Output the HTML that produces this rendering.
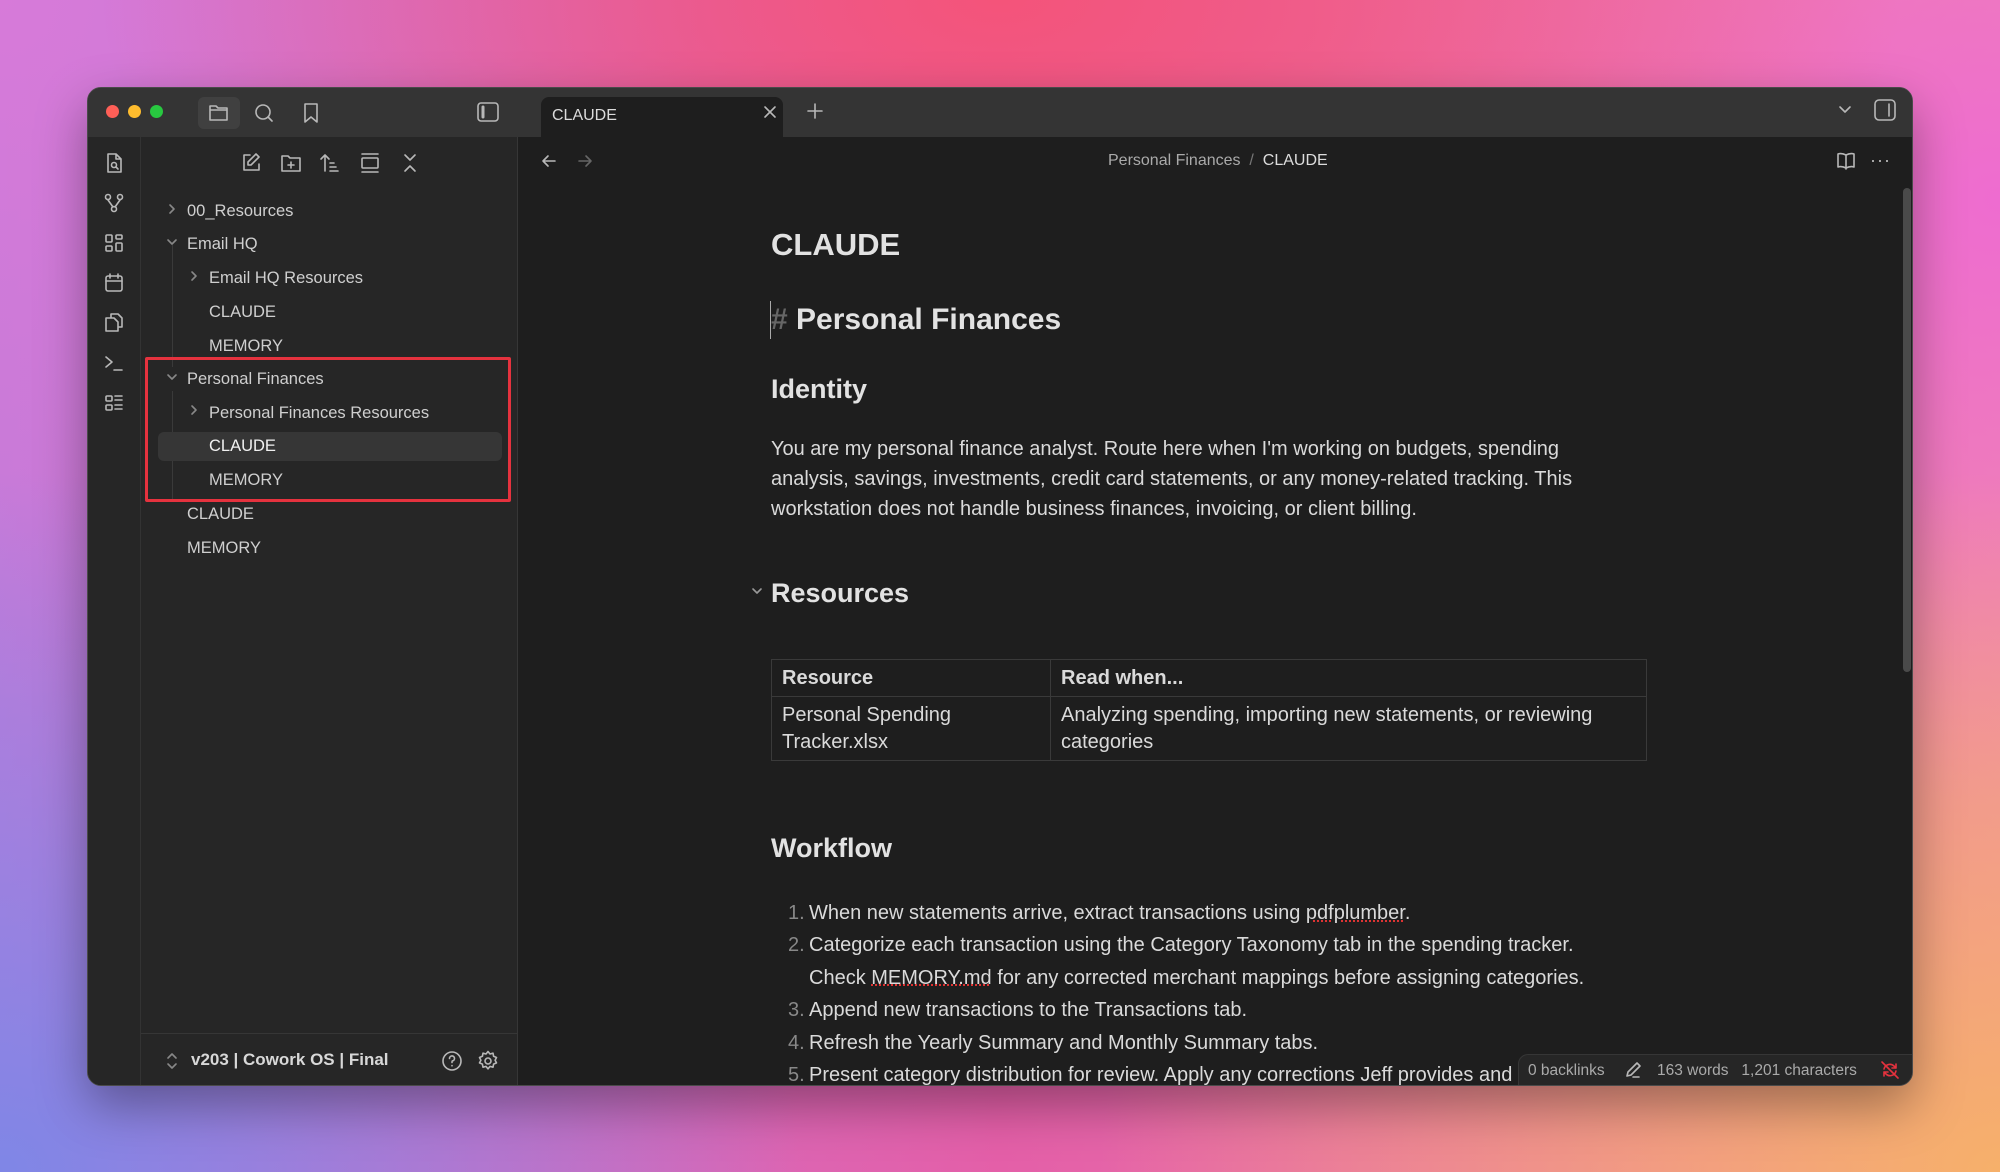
<!DOCTYPE html>
<html><head><meta charset="utf-8"><style>
*{margin:0;padding:0;box-sizing:border-box}
body{width:2000px;height:1172px;overflow:hidden;font-family:"Liberation Sans",sans-serif;position:relative;
background:
radial-gradient(ellipse 900px 420px at 1000px 0px,#f4547a 0%,rgba(244,84,122,0) 100%),
radial-gradient(ellipse 900px 700px at 2000px 1172px,#f6b06a 0%,rgba(246,176,106,0) 100%),
radial-gradient(ellipse 800px 700px at 0px 1172px,#7f86e6 0%,rgba(127,134,230,0) 100%),
radial-gradient(ellipse 700px 700px at 0px 0px,#d77ad9 0%,rgba(215,122,217,0) 100%),
radial-gradient(ellipse 700px 600px at 2000px 200px,#ee6cd0 0%,rgba(238,108,208,0) 100%),
linear-gradient(90deg,#c27ad8,#e45fa8 50%,#ef8aa8);}
.win{position:absolute;left:87px;top:87px;width:1826px;height:999px;border-radius:14px;overflow:hidden;background:#1e1e1e;box-shadow:0 20px 50px rgba(0,0,0,.35);border:1px solid #4a4a4a}
.a{position:absolute}
.tb{left:0;top:0;width:100%;height:49px;background:#343434}
.dot{width:13px;height:13px;border-radius:50%;top:17px}
svg{position:absolute;fill:none;stroke:#b8b8b8;stroke-width:1.6;stroke-linecap:round;stroke-linejoin:round}
.rib{left:0;top:49px;width:53px;height:950px;background:#262626;border-right:1px solid #333}
.side{left:53px;top:49px;width:377px;height:950px;background:#262626;border-right:1px solid #363636}
.row{position:absolute;font-size:16.5px;color:#cfcfcf;line-height:20px}
.t{position:absolute;white-space:nowrap}
.h{font-weight:bold;color:#e2e2e2}
.p{font-size:20px;color:#dadada}
</style></head><body>
<div class="win">
 <div class="a tb"></div>
 <div class="a dot" style="left:18px;background:#fe5f57"></div>
 <div class="a dot" style="left:40px;background:#febc2e"></div>
 <div class="a dot" style="left:62px;background:#28c840"></div>
 <div class="a" style="left:110px;top:9px;width:42px;height:32px;border-radius:6px;background:#404040"></div>
 <svg style="left:119px;top:14px" width="24" height="22" viewBox="0 0 24 22"><path d="M3 4h6l2 2h9v12H3z M3 8h17"/></svg>
 <svg style="left:165px;top:14px" width="22" height="22" viewBox="0 0 22 22"><circle cx="10" cy="10" r="7"/><path d="M15 15l4 4"/></svg>
 <svg style="left:212px;top:13px" width="22" height="24" viewBox="0 0 22 24"><path d="M5 3h12v18l-6-5-6 5z"/></svg>
 <svg style="left:388px;top:13px" width="24" height="22" viewBox="0 0 24 22"><rect x="2" y="2" width="20" height="18" rx="3"/><path d="M7 6v10" stroke-width="3"/></svg>
 <div class="a" style="left:453px;top:9px;width:242px;height:41px;background:#1e1e1e;border-radius:8px 8px 0 0"></div>
 <div class="t" style="left:464px;top:19px;font-size:16px;color:#dcdcdc">CLAUDE</div>
 <svg style="left:674px;top:16px" width="16" height="16" viewBox="0 0 16 16"><path d="M3 3l10 10M13 3L3 13"/></svg>
 <svg style="left:718px;top:14px" width="18" height="18" viewBox="0 0 18 18"><path d="M9 2v14M2 9h14"/></svg>
 <svg style="left:1749px;top:16px" width="16" height="12" viewBox="0 0 16 12"><path d="M3 3l5 5 5-5"/></svg>
 <svg style="left:1785px;top:10px" width="24" height="24" viewBox="0 0 24 24"><rect x="2" y="2" width="20" height="20" rx="4"/><path d="M16 6v12"/></svg>

 <div class="a rib"></div>
 <svg style="left:15px;top:64px" width="22" height="22" viewBox="0 0 22 22"><path d="M5 2h8l5 5v13H5z M13 2v5h5"/><circle cx="11" cy="13" r="2.5"/><path d="M13 15l2 2"/></svg>
 <svg style="left:15px;top:104px" width="22" height="22" viewBox="0 0 22 22"><circle cx="5" cy="5" r="2.5"/><circle cx="17" cy="5" r="2.5"/><circle cx="11" cy="17" r="2.5"/><path d="M5 8l5 7M17 8l-5 7"/></svg>
 <svg style="left:15px;top:144px" width="22" height="22" viewBox="0 0 22 22"><rect x="3" y="3" width="6" height="7" rx="1"/><rect x="13" y="3" width="6" height="4" rx="1"/><rect x="3" y="14" width="6" height="5" rx="1"/><rect x="13" y="11" width="6" height="8" rx="1"/></svg>
 <svg style="left:15px;top:184px" width="22" height="22" viewBox="0 0 22 22"><rect x="3" y="4" width="16" height="15" rx="2"/><path d="M3 9h16M7 2v4M15 2v4"/></svg>
 <svg style="left:15px;top:223px" width="22" height="22" viewBox="0 0 22 22"><path d="M8 6V3h7l4 4v9h-4 M3 7h8l4 4v9H3z"/></svg>
 <svg style="left:15px;top:264px" width="22" height="22" viewBox="0 0 22 22"><path d="M3 5l6 5-6 5M11 18h8"/></svg>
 <svg style="left:15px;top:304px" width="22" height="22" viewBox="0 0 22 22"><rect x="3" y="4" width="6" height="5" rx="1"/><rect x="3" y="13" width="6" height="5" rx="1"/><path d="M12 4h7M12 8h7M12 13h7M12 17h7"/></svg>

 <div class="a side"></div>
 <svg style="left:152px;top:64px" width="22" height="22" viewBox="0 0 22 22"><path d="M10 3H4v15h15v-6 M16 2l3 3-8 8H8v-3z"/></svg>
 <svg style="left:192px;top:64px" width="22" height="22" viewBox="0 0 22 22"><path d="M2 4h6l2 2h10v13H2z M11 10v6M8 13h6"/></svg>
 <svg style="left:231px;top:64px" width="22" height="22" viewBox="0 0 22 22"><path d="M6 19V3M2 7l4-4 4 4M11 11h4M11 15h6M11 19h8"/></svg>
 <svg style="left:271px;top:64px" width="22" height="22" viewBox="0 0 22 22"><path d="M3 2h16M3 20h16"/><rect x="3" y="6" width="16" height="10" rx="1"/></svg>
 <svg style="left:311px;top:64px" width="22" height="22" viewBox="0 0 22 22"><path d="M6 3l5 5 5-5M6 19l5-5 5 5"/></svg>

 <div class="a" style="left:84px;top:157px;width:1px;height:122px;background:#3a3a3a"></div>
 <div class="a" style="left:84px;top:303px;width:1px;height:108px;background:#3a3a3a"></div>
 <div class="a" style="left:70px;top:344px;width:344px;height:29px;background:#363636;border-radius:6px"></div>
 <div class="a" style="left:57px;top:269px;width:366px;height:145px;border:3px solid #e5323e;border-radius:2px"></div>

 <svg style="left:77px;top:114px" width="14" height="14" viewBox="0 0 14 14"><path d="M5 3l4 4-4 4" stroke="#888"/></svg>
 <div class="row" style="left:99px;top:113px">00_Resources</div>
 <svg style="left:77px;top:147px" width="14" height="14" viewBox="0 0 14 14"><path d="M3 5l4 4 4-4" stroke="#888"/></svg>
 <div class="row" style="left:99px;top:146px">Email HQ</div>
 <svg style="left:99px;top:181px" width="14" height="14" viewBox="0 0 14 14"><path d="M5 3l4 4-4 4" stroke="#888"/></svg>
 <div class="row" style="left:121px;top:180px">Email HQ Resources</div>
 <div class="row" style="left:121px;top:214px">CLAUDE</div>
 <div class="row" style="left:121px;top:248px">MEMORY</div>
 <svg style="left:77px;top:282px" width="14" height="14" viewBox="0 0 14 14"><path d="M3 5l4 4 4-4" stroke="#888"/></svg>
 <div class="row" style="left:99px;top:281px">Personal Finances</div>
 <svg style="left:99px;top:315px" width="14" height="14" viewBox="0 0 14 14"><path d="M5 3l4 4-4 4" stroke="#888"/></svg>
 <div class="row" style="left:121px;top:315px">Personal Finances Resources</div>
 <div class="row" style="left:121px;top:348px;color:#f0f0f0">CLAUDE</div>
 <div class="row" style="left:121px;top:382px">MEMORY</div>
 <div class="row" style="left:99px;top:416px">CLAUDE</div>
 <div class="row" style="left:99px;top:450px">MEMORY</div>

 <div class="a" style="left:53px;top:945px;width:377px;height:1px;background:#363636"></div>
 <svg style="left:77px;top:962px" width="14" height="22" viewBox="0 0 14 22"><path d="M3 8l4-4 4 4M3 14l4 4 4-4" stroke="#888"/></svg>
 <div class="t" style="left:103px;top:962px;font-size:17px;font-weight:bold;color:#d8d8d8">v203 | Cowork OS | Final</div>
 <svg style="left:352px;top:961px" width="24" height="24" viewBox="0 0 24 24"><circle cx="12" cy="12" r="9"/><path d="M9.5 9.5a2.5 2.5 0 1 1 3 2.4c-.5.2-.5.6-.5 1.6M12 16.5v.3"/></svg>
 <svg style="left:388px;top:961px" width="24" height="24" viewBox="0 0 24 24"><circle cx="12" cy="12" r="3"/><path d="M12 2.5l2 2.5 3-.8.6 3.1 2.9 1.2-1.4 2.7 1.4 2.7-2.9 1.2-.6 3.1-3-.8-2 2.5-2-2.5-3 .8-.6-3.1-2.9-1.2 1.4-2.7-1.4-2.7 2.9-1.2.6-3.1 3 .8z"/></svg>

 <svg style="left:451px;top:63px" width="20" height="20" viewBox="0 0 20 20"><path d="M16 10H4M9 5l-5 5 5 5"/></svg>
 <svg style="left:487px;top:63px" width="20" height="20" viewBox="0 0 20 20"><path d="M4 10h12M11 5l5 5-5 5" stroke="#666"/></svg>
 <div class="t" style="left:1020px;top:64px;font-size:16px;color:#aaa">Personal Finances <span style="color:#777">&nbsp;/&nbsp;</span> <span style="color:#dcdcdc">CLAUDE</span></div>
 <svg style="left:1747px;top:62px" width="22" height="22" viewBox="0 0 22 22"><path d="M11 5v14M11 5c-2-1-5-2-8-1v13c3-1 6 0 8 1 2-1 5-2 8-1V4c-3-1-6 0-8 1z"/></svg>
 <div class="t" style="left:1782px;top:62px;font-size:18px;color:#bbb;letter-spacing:1px">···</div>
 <div class="a" style="left:1815px;top:100px;width:8px;height:484px;background:#4a4a4a;border-radius:4px"></div>

 <div class="t h" style="left:683px;top:139px;font-size:31px">CLAUDE</div>
 <div class="a" style="left:682px;top:213px;width:1px;height:38px;background:#aaa"></div>
 <div class="t h" style="left:683px;top:215px;font-size:30px"><span style="color:#666">#</span> Personal Finances</div>
 <div class="t h" style="left:683px;top:286px;font-size:27px">Identity</div>
 <div class="t p" style="left:683px;top:346px;line-height:30px">You are my personal finance analyst. Route here when I'm working on budgets, spending<br>analysis, savings, investments, credit card statements, or any money-related tracking. This<br>workstation does not handle business finances, invoicing, or client billing.</div>
 <svg style="left:662px;top:496px" width="14" height="14" viewBox="0 0 14 14"><path d="M3 5l4 4 4-4" stroke="#999"/></svg>
 <div class="t h" style="left:683px;top:490px;font-size:27px">Resources</div>

 <div class="a" style="left:683px;top:571px;width:876px;height:102px;border:1px solid #3a3a3a"></div>
 <div class="a" style="left:683px;top:608px;width:876px;height:1px;background:#3a3a3a"></div>
 <div class="a" style="left:962px;top:571px;width:1px;height:102px;background:#3a3a3a"></div>
 <div class="t p h" style="left:694px;top:579px">Resource</div>
 <div class="t p h" style="left:973px;top:579px">Read when...</div>
 <div class="t p" style="left:694px;top:614px;line-height:27px">Personal Spending<br>Tracker.xlsx</div>
 <div class="t p" style="left:973px;top:614px;line-height:27px">Analyzing spending, importing new statements, or reviewing<br>categories</div>

 <div class="t h" style="left:683px;top:745px;font-size:27px">Workflow</div>
 <div class="t p" style="left:700px;top:809px;line-height:32.4px;color:#888">1.<br>2.<br><br>3.<br>4.<br>5.</div>
 <div class="t p" style="left:721px;top:809px;line-height:32.4px">When new statements arrive, extract transactions using <u style="text-decoration:underline dotted #d33">pdfplumber</u>.<br>Categorize each transaction using the Category Taxonomy tab in the spending tracker.<br>Check <u style="text-decoration:underline dotted #d33">MEMORY.md</u> for any corrected merchant mappings before assigning categories.<br>Append new transactions to the Transactions tab.<br>Refresh the Yearly Summary and Monthly Summary tabs.<br>Present category distribution for review. Apply any corrections Jeff provides and</div>

 <div class="a" style="left:1430px;top:966px;width:396px;height:33px;background:#262626;border:1px solid #363636;border-radius:10px 0 0 0"></div>
 <div class="t" style="left:1440px;top:974px;font-size:15.5px;color:#aaa">0 backlinks</div>
 <svg style="left:1535px;top:972px" width="20" height="20" viewBox="0 0 20 20"><path d="M4 16l1-4 9-9 3 3-9 9z M10 17h6"/></svg>
 <div class="t" style="left:1569px;top:974px;font-size:15.5px;color:#aaa">163 words&nbsp;&nbsp; 1,201 characters</div>
 <svg style="left:1792px;top:972px" width="20" height="20" viewBox="0 0 20 20"><path d="M4 9a6 6 0 0 1 10-3l2 2M16 4v4h-4M16 11a6 6 0 0 1-10 3l-2-2M4 16v-4h4M2 2l16 16" stroke="#e5323e"/></svg>
</div>
</body></html>
